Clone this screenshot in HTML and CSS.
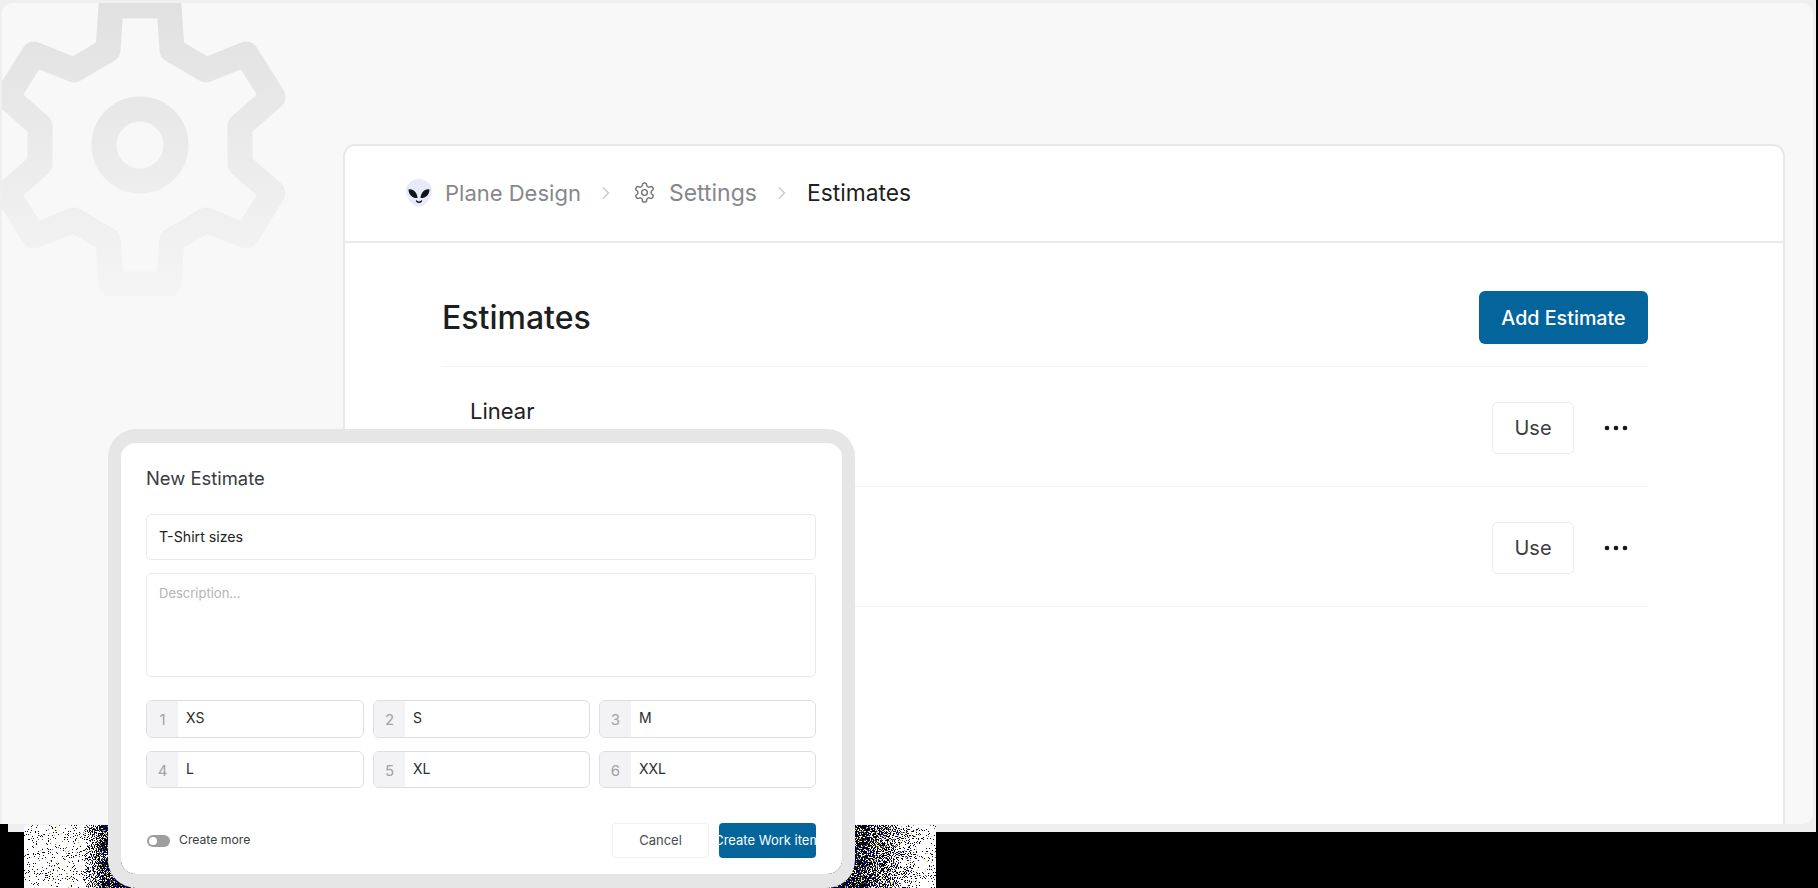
FILE: index.html
```html
<!DOCTYPE html>
<html lang="en">
<head>
    <meta charset="UTF-8">
    <title>Estimates</title>
    <link rel="stylesheet" href="styles.css">
</head>
<body>
    <div class="frame">
        <div class="panel">
            <!-- Big faded gear behind the card -->
            <svg class="bg-gear" viewBox="-141 -144 300 300" width="300" height="300">
                <defs>
                    <linearGradient id="gearFade" gradientUnits="userSpaceOnUse" x1="0" y1="-150" x2="0" y2="155">
                        <stop offset="0" stop-color="#e0e0e0"/>
                        <stop offset="1" stop-color="#f5f5f5"/>
                    </linearGradient>
                </defs>
                <g fill="none" stroke="url(#gearFade)" stroke-width="25" stroke-linejoin="round">
                    <path d="M29 -139L32 -95L66 -75L106 -91L133 -48L100 -19L100 19L133 48L106 91L66 75L32 95L29 139L-29 139L-32 95L-66 75L-106 91L-133 48L-100 19L-100 -19L-133 -48L-106 -91L-66 -75L-32 -95L-29 -139Z"/>
                    <circle cx="0" cy="0" r="36"/>
                </g>
            </svg>

            <div class="card">
                <header class="crumbs">
                    <svg class="logo" viewBox="0 0 26 28" width="26" height="28">
                        <path d="M13 0C20 0 26 5 26 12C26 19 18 28 13 28C8 28 0 19 0 12C0 5 6 0 13 0Z" fill="#e6eafa"/>
                        <path d="M2.5 10.5C6.5 9.5 11 13 11.5 19C7 19.5 2.5 16 2.5 10.5Z" fill="#10151c"/>
                        <path d="M23.5 10.5C19.5 9.5 15 13 14.5 19C19 19.5 23.5 16 23.5 10.5Z" fill="#10151c"/>
                        <path d="M10.5 22C12 23.5 14 23.5 15.5 22" fill="none" stroke="#10151c" stroke-width="1.4" stroke-linecap="round"/>
                    </svg>
                    <span class="crumb crumb-first">Plane Design</span>
                    <svg class="chev" viewBox="0 0 8 14" width="8" height="14"><path d="M1 1.5L6.5 7L1 12.5" fill="none" stroke="#c9cbcd" stroke-width="1.5"/></svg>
                    <svg class="cog" viewBox="0 0 24 24" width="23" height="23" fill="none" stroke="#74777a" stroke-width="1.5" stroke-linecap="round" stroke-linejoin="round">
                        <path d="M12.22 2h-.44a2 2 0 0 0-2 2v.18a2 2 0 0 1-1 1.73l-.43.25a2 2 0 0 1-2 0l-.15-.08a2 2 0 0 0-2.73.73l-.22.38a2 2 0 0 0 .73 2.73l.15.1a2 2 0 0 1 1 1.72v.51a2 2 0 0 1-1 1.74l-.15.09a2 2 0 0 0-.73 2.73l.22.38a2 2 0 0 0 2.73.73l.15-.08a2 2 0 0 1 2 0l.43.25a2 2 0 0 1 1 1.73V20a2 2 0 0 0 2 2h.44a2 2 0 0 0 2-2v-.18a2 2 0 0 1 1-1.73l.43-.25a2 2 0 0 1 2 0l.15.08a2 2 0 0 0 2.73-.73l.22-.39a2 2 0 0 0-.73-2.73l-.15-.08a2 2 0 0 1-1-1.74v-.5a2 2 0 0 1 1-1.74l.15-.09a2 2 0 0 0 .73-2.73l-.22-.38a2 2 0 0 0-2.73-.73l-.15.08a2 2 0 0 1-2 0l-.43-.25a2 2 0 0 1-1-1.73V4a2 2 0 0 0-2-2z"/>
                        <circle cx="12" cy="12" r="3"/>
                    </svg>
                    <span class="crumb">Settings</span>
                    <svg class="chev" viewBox="0 0 8 14" width="8" height="14"><path d="M1 1.5L6.5 7L1 12.5" fill="none" stroke="#c9cbcd" stroke-width="1.5"/></svg>
                    <span class="crumb current">Estimates</span>
                </header>

                <section class="content">
                    <div class="title-row">
                        <h1>Estimates</h1>
                        <button class="btn-primary">Add Estimate</button>
                    </div>
                    <div class="row">
                        <div class="row-name">Linear</div>
                        <div class="row-actions">
                            <button class="btn-use">Use</button>
                            <svg class="dots" viewBox="0 0 24 6" width="24" height="6"><circle cx="3" cy="3" r="2.3"/><circle cx="12" cy="3" r="2.3"/><circle cx="21" cy="3" r="2.3"/></svg>
                        </div>
                    </div>
                    <div class="row">
                        <div class="row-actions">
                            <button class="btn-use">Use</button>
                            <svg class="dots" viewBox="0 0 24 6" width="24" height="6"><circle cx="3" cy="3" r="2.3"/><circle cx="12" cy="3" r="2.3"/><circle cx="21" cy="3" r="2.3"/></svg>
                        </div>
                    </div>
                </section>
            </div>
        </div>
    </div>
    <div class="ledge"></div>

    <!-- Speckled glow that pokes out below the frame -->
    <svg class="grain" width="912" height="63">
        <defs>
            <linearGradient id="grainFade" x1="0" y1="0" x2="1" y2="0">
                <stop offset="0.06" stop-color="#000" stop-opacity="0.34"/>
                <stop offset="0.092" stop-color="#000" stop-opacity="0.66"/>
                <stop offset="0.5" stop-color="#000" stop-opacity="0.8"/>
                <stop offset="0.91" stop-color="#000" stop-opacity="0.66"/>
                <stop offset="0.99" stop-color="#000" stop-opacity="0.34"/>
            </linearGradient>
            <filter id="grainFilter" x="0" y="0" width="100%" height="100%" color-interpolation-filters="sRGB">
                <feTurbulence type="fractalNoise" baseFrequency="0.95" numOctaves="2" seed="7" result="noise"/>
                <feColorMatrix in="noise" type="matrix" values="0 0 0 0 0  0 0 0 0 0  0 0 0 0 0  0 0 0 1 0" result="noiseAlpha"/>
                <feComposite in="noiseAlpha" in2="SourceGraphic" operator="arithmetic" k1="0" k2="1" k3="1" k4="-1" result="sum"/>
                <feComponentTransfer in="sum" result="mask"><feFuncA type="linear" slope="60"/></feComponentTransfer>
                <feTurbulence type="fractalNoise" baseFrequency="0.8" numOctaves="1" seed="21" result="tint"/>
                <feColorMatrix in="tint" type="matrix" values="8 0 0 0 -4.6  8 0 0 0 -4.6  0 6 0 0 -3.2  0 0 0 0 1" result="colors"/>
                <feComposite in="colors" in2="mask" operator="in"/>
            </filter>
        </defs>
        <rect width="912" height="63" fill="url(#grainFade)" filter="url(#grainFilter)"/>
    </svg>

    <!-- New estimate modal -->
    <div class="modal">
        <div class="modal-title">New Estimate</div>
        <div class="input name-input">T-Shirt sizes</div>
        <div class="input desc-input">Description...</div>
        <div class="size-grid">
            <div class="size"><span class="size-num">1</span><span class="size-val">XS</span></div>
            <div class="size"><span class="size-num">2</span><span class="size-val">S</span></div>
            <div class="size"><span class="size-num">3</span><span class="size-val">M</span></div>
            <div class="size"><span class="size-num">4</span><span class="size-val">L</span></div>
            <div class="size"><span class="size-num">5</span><span class="size-val">XL</span></div>
            <div class="size"><span class="size-num">6</span><span class="size-val">XXL</span></div>
        </div>
        <div class="modal-footer">
            <span class="toggle"></span>
            <span class="toggle-label">Create more</span>
            <button class="btn-cancel">Cancel</button>
            <button class="btn-create"><span>Create Work item</span></button>
        </div>
    </div>
</body>
</html>
```
FILE: styles.css
```css
* {
    box-sizing: border-box;
}
html, body {
    height: 888px;
    overflow: hidden;
}
body {
    margin: 0;
    background: #000;
    font-family: Inter, "Noto Sans", sans-serif;
    position: relative;
}
button {
    font-family: inherit;
    cursor: pointer;
}

/* frame */
.frame {
    width: 1816px;
    height: 824px;
    padding: 3px 3px 0 2px;
    background: #efefef;
}
.panel {
    position: relative;
    height: 100%;
    padding: 141px 28px 0 341px;
    background: #f8f8f9;
    border-radius: 10px 10px 10px 0;
    overflow: hidden;
}
.ledge {
    height: 8px;
    width: 1808px;
    margin-left: 8px;
    background: #efefef;
}
.bg-gear {
    position: absolute;
    left: -3px;
    top: -2px;
}

/* main card */
.card {
    position: relative;
    height: 100%;
    background: #fff;
    border: 2px solid #e8e8ea;
    border-bottom: none;
    border-radius: 12px 12px 0 0;
}
.crumbs {
    display: flex;
    align-items: center;
    height: 97px;
    padding: 0 0 2px 61px;
    border-bottom: 2px solid #eaeaea;
}
.logo {
    margin-right: 13px;
}
.crumb {
    font-size: 23px;
    color: #85888b;
}
.crumb-first {
    font-size: 22px;
}
.crumb.current {
    margin-left: -2px;
    font-size: 22.8px;
    color: #1d1f21;
}
.chev {
    margin: 0 23px 0 21px;
}
.cog {
    margin-right: 13px;
}

.content {
    padding: 48px 135px 0 97px;
}
.title-row {
    display: flex;
    justify-content: space-between;
    align-items: center;
    padding-bottom: 22px;
    border-bottom: 1.5px solid #f1f1f2;
}
h1 {
    margin: 0;
    font-size: 32px;
    font-weight: 450;
    color: #1c1e20;
}
.btn-primary {
    width: 169px;
    height: 53px;
    font-size: 19.7px;
    font-weight: 450;
    color: #fff;
    background: #04659c;
    border: none;
    border-radius: 6px;
}
.row {
    display: flex;
    height: 120px;
    padding-left: 28px;
    border-bottom: 1.5px solid #f1f1f2;
}
.row-name {
    margin-top: 30px;
    font-size: 22px;
    line-height: 28px;
    color: #222;
}
.row-actions {
    display: flex;
    align-items: center;
    gap: 30px;
    margin-left: auto;
    padding: 3px 20px 0 0;
}
.btn-use {
    width: 82px;
    height: 52px;
    font-size: 20px;
    color: #3c3e40;
    background: #fff;
    border: 1.5px solid #ececee;
    border-radius: 5px;
}
.dots {
    fill: #15171a;
}

/* modal */
.modal {
    position: absolute;
    left: 108px;
    top: 429px;
    width: 747px;
    height: 459px;
    padding: 23px 26px 16px 25px;
    background: #fff;
    background-clip: padding-box;
    border: solid #e6e6e6;
    border-width: 14px 13px;
    border-radius: 28px;
}
.modal-title {
    font-size: 18.4px;
    line-height: 24px;
    color: #3a3c3e;
    margin-bottom: 24px;
}
.input {
    border: 1.5px solid #e9e9eb;
    border-radius: 5px;
    padding: 0 12px;
}
.name-input {
    height: 46px;
    line-height: 43px;
    font-size: 14.2px;
    color: #222;
    margin-bottom: 13px;
}
.desc-input {
    height: 104px;
    padding-top: 10px;
    font-size: 13px;
    line-height: 18px;
    color: #b4b4b6;
    margin-bottom: 23px;
}
.size-grid {
    display: grid;
    grid-template-columns: 218px 217px 217px;
    grid-auto-rows: 37.5px;
    column-gap: 9px;
    row-gap: 13px;
}
.size {
    display: flex;
    align-items: stretch;
    border: 1.5px solid #dedee0;
    border-radius: 6px;
    overflow: hidden;
}
.size-num {
    width: 31px;
    padding-top: 3px;
    line-height: 32px;
    text-align: center;
    font-size: 15px;
    color: #a0a2a4;
    background: #f3f3f5;
}
.size-val {
    padding-left: 8px;
    line-height: 33px;
    font-size: 14px;
    color: #2a2c2e;
}
.modal-footer {
    display: flex;
    align-items: center;
    margin-top: 35px;
}
.toggle {
    position: relative;
    width: 23px;
    height: 12px;
    margin-left: 1px;
    background: #9e9ea0;
    border-radius: 6px;
}
.toggle::after {
    content: "";
    position: absolute;
    left: 2px;
    top: 2px;
    width: 8px;
    height: 8px;
    background: #fff;
    border-radius: 50%;
}
.toggle-label {
    margin: 0 0 2px 9px;
    font-size: 12.2px;
    color: #3a3c3e;
}
.btn-cancel {
    width: 97px;
    height: 35px;
    margin-left: auto;
    padding: 0 0 2px;
    font-size: 13px;
    color: #4a4c4e;
    background: #fff;
    border: 1.5px solid #f0f0f2;
    border-radius: 4px;
}
.btn-create {
    display: flex;
    justify-content: center;
    width: 97px;
    height: 35px;
    margin-left: 10px;
    padding: 0 0 2px;
    align-items: center;
    overflow: hidden;
    font-size: 13px;
    color: #fff;
    white-space: nowrap;
    background: #04659c;
    border: none;
    border-radius: 4px;
}

/* speckle strip */
.grain {
    position: absolute;
    left: 24px;
    top: 825px;
    background: #fff;
}
```
